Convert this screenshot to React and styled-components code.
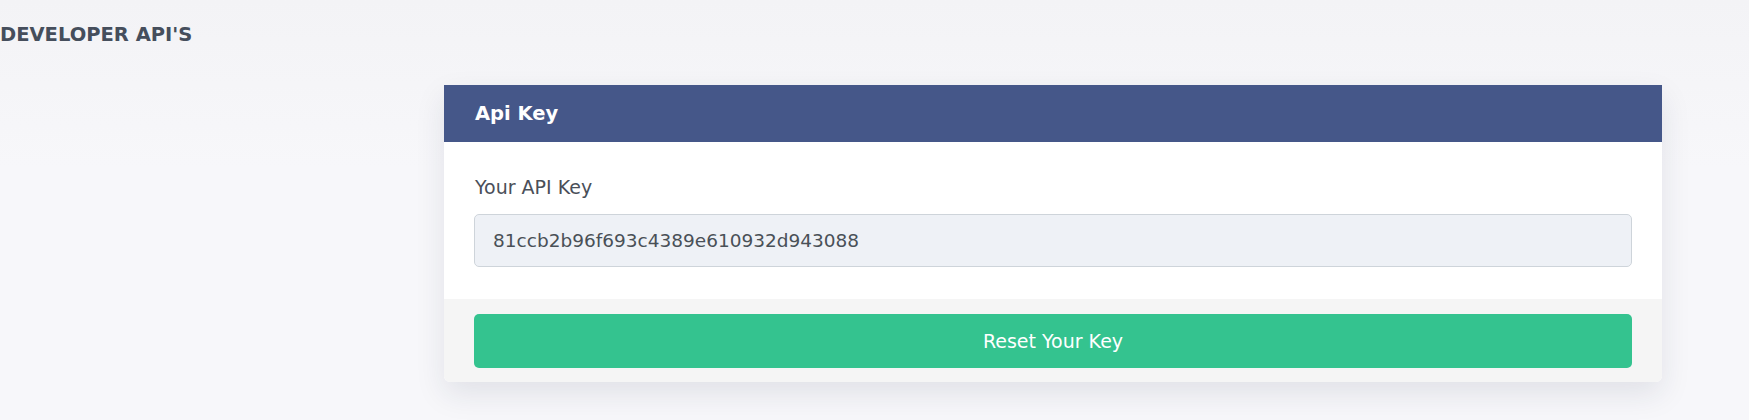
import React from 'react';
import styled, { createGlobalStyle } from 'styled-components';

const GlobalStyle = createGlobalStyle`
    html, body {
        margin: 0;
        padding: 0;
        background: #f6f6f9;
        font-family: "DejaVu Sans", "Open Sans", sans-serif;
    }
`;

const Page = styled.div`
    height: 420px;
    background: linear-gradient(180deg, #f3f3f6 0%, #f7f7fa 40%, #f7f7fa 100%);
    overflow: hidden;
`;

const Title = styled.h4`
    margin: 0;
    padding: 20px 0 0 0;
    font-size: 19.5px;
    line-height: 30px;
    font-weight: 700;
    color: #454e5c;
    text-transform: uppercase;
`;

const Row = styled.div`
    display: flex;
    padding: 35px 87px 0 444px;
`;

const Card = styled.div`
    flex: 1;
    background: #fff;
    border-radius: 0 0 6px 6px;
    box-shadow: 0 12px 30px rgba(30, 40, 70, 0.1);
    overflow: hidden;
`;

const CardHeader = styled.div`
    height: 57px;
    display: flex;
    align-items: center;
    padding: 0 31px;
    background: #455789;
    color: #fff;
    font-size: 19.5px;
    font-weight: 700;
`;

const CardBody = styled.div`
    padding: 33px 30px 32px;
`;

const Label = styled.label`
    display: block;
    font-size: 19px;
    line-height: 24px;
    color: #4a4f59;
    margin: 0 0 0 1px;
`;

const KeyInput = styled.input`
    display: block;
    box-sizing: border-box;
    width: 100%;
    height: 53px;
    margin-top: 15px;
    padding: 0 18px;
    background: #eef1f6;
    border: 1px solid #ced4da;
    border-radius: 5px;
    font-family: "DejaVu Sans", "Open Sans", sans-serif;
    font-size: 18.5px;
    color: #495057;
    outline: none;
`;

const CardFooter = styled.div`
    background: #f5f5f5;
    padding: 15px 30px 14px;
`;

const ResetButton = styled.button`
    display: block;
    width: 100%;
    height: 54px;
    border: none;
    border-radius: 5px;
    background: #34c38f;
    color: #fff;
    font-family: "DejaVu Sans", "Open Sans", sans-serif;
    font-size: 19px;
    cursor: pointer;
`;

const App = () => {
    return (
        <Page>
            <GlobalStyle />
            <Title>Developer API's</Title>
            <Row>
                <Card>
                    <CardHeader>Api Key</CardHeader>
                    <CardBody>
                        <Label>Your API Key</Label>
                        <KeyInput readOnly value="81ccb2b96f693c4389e610932d943088" />
                    </CardBody>
                    <CardFooter>
                        <ResetButton>Reset Your Key</ResetButton>
                    </CardFooter>
                </Card>
            </Row>
        </Page>
    );
}

export default App;
